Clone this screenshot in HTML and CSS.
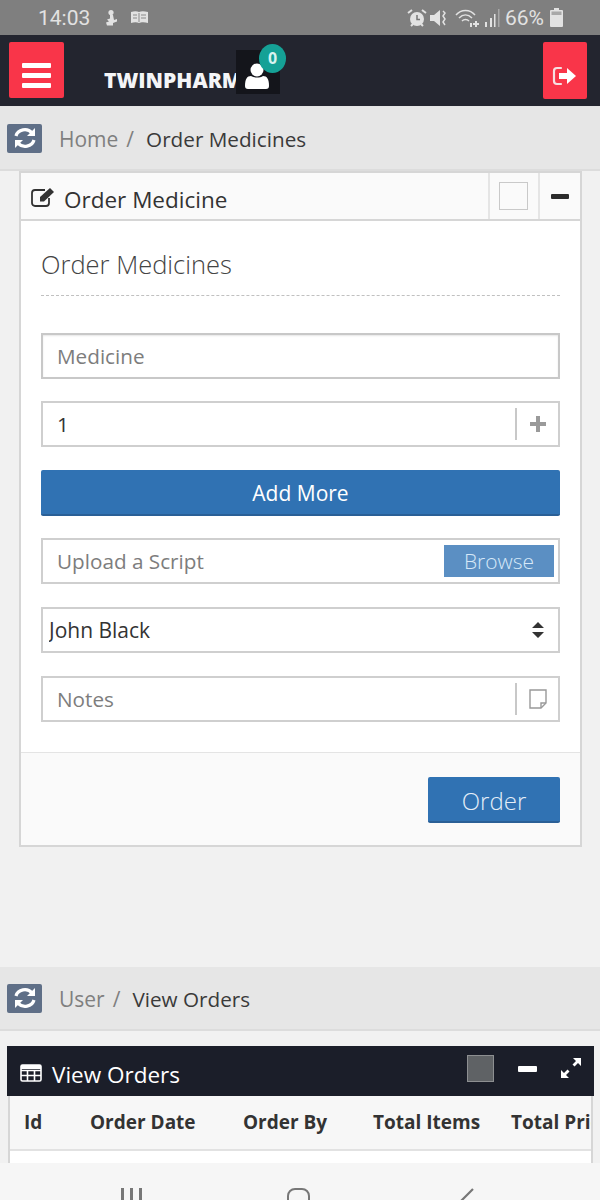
FILE: index.html
```html
<!DOCTYPE html>
<html lang="en">
<head>
    <meta charset="UTF-8">
    <meta name="viewport" content="width=device-width, initial-scale=1.0">
    <title>Order Medicines</title>
    <link rel="stylesheet" href="styles.css">
</head>
<body>
    <!-- Phone status bar -->
    <div class="status-bar">
        <div class="status-left">
            <span class="clock">14:03</span>
            <svg class="status-icon" width="16" height="18" viewBox="0 0 16 18"><circle cx="8" cy="3.500" r="2.600" fill="#e2e2e2"/><path d="M7 6h3l1 5 3-1v2.500l-4 1.500v2.500H4l-1-3 3-1-2-2 3-1z" fill="#e2e2e2"/></svg>
            <svg class="status-icon book" width="19" height="15" viewBox="0 0 19 15"><path d="M1 2c3-1 6-1 8 0 2-1 5-1 9 0v11c-3-1-7-1-9 0-2-1-5-1-8 0z" fill="#e2e2e2"/><path d="M9 3v9" stroke="#8a8a8a"/><path d="M3 5h4M3 8h4M11 5h5M11 8h5" stroke="#8a8a8a"/></svg>
        </div>
        <div class="status-right">
            <svg width="20" height="20" viewBox="0 0 20 20"><circle cx="10" cy="11" r="7" fill="#e2e2e2"/><path d="M10 7v4.500h3" stroke="#777" stroke-width="1.500" fill="none"/><path d="M1 5l4-3M19 5l-4-3M4 18l2-2M16 18l-2-2" stroke="#e2e2e2" stroke-width="2"/></svg>
            <svg width="18" height="20" viewBox="0 0 18 20"><path d="M0 7h4l6-5v16l-6-5H0z" fill="#e2e2e2"/><path d="M13 3l2 2-2 3 2 3-2 3 2 3" stroke="#e2e2e2" stroke-width="1.500" fill="none"/></svg>
            <svg class="wifi" width="26" height="20" viewBox="0 0 26 20"><path d="M1 7c5-6 14-6 19 0M4 10c4-4 9-4 13 0M7 13c2-2 5-2 7 0" stroke="#e2e2e2" stroke-width="1.500" fill="none"/><path d="M15 15h2v4h-2zM20 13h2v2h2v2h-2v2h-2v-2h-2v-2h2z" fill="#e2e2e2"/></svg>
            <svg width="16" height="20" viewBox="0 0 16 20"><path d="M1 14h2v5H1zM6 10h2v9H6zM10 6h1.500v13H10z" fill="#e2e2e2"/><path d="M14 1h1.500v18H14z" fill="#a8a8a8"/></svg>
            <span class="battery-text">66%</span>
            <svg width="13" height="19" viewBox="0 0 13 19"><path d="M4 0h5v2h3a1 1 0 0 1 1 1v15a1 1 0 0 1-1 1H1a1 1 0 0 1-1-1V3a1 1 0 0 1 1-1h3z" fill="#e2e2e2"/><path d="M1.500 3.500h10V7h-10z" fill="#a8a8a8"/></svg>
        </div>
    </div>

    <div class="header">
        <button class="red-btn menu">
            <span class="burger"></span>
            <span class="burger"></span>
            <span class="burger"></span>
        </button>
        <div class="logo-wrap"><span class="logo">TWINPHARM</span></div>
        <div class="user-box">
            <svg width="26" height="28" viewBox="0 0 26 28"><circle cx="13" cy="8" r="6.500" fill="#fff"/><path d="M1 24c0-7 2-10 6-10 3 2 9 2 12 0 4 0 6 3 6 10 0 2-1 3-3 3H4c-2 0-3-1-3-3z" fill="#fff"/></svg>
            <span class="badge">0</span>
        </div>
        <button class="red-btn logout">
            <svg width="26" height="22" viewBox="0 0 26 22"><path d="M9 3H5a3 3 0 0 0-3 3v10a3 3 0 0 0 3 3h4" stroke="#f6dfe2" stroke-width="2.200" fill="none" stroke-linecap="round"/><path d="M7 8h8V3l9 8-9 8v-5H7z" fill="#fff"/></svg>
        </button>
    </div>

    <div class="main">
        <div class="crumb">
            <span class="crumb-icon">
                <svg width="26" height="24" viewBox="0 0 26 24"><path d="M4 10a9 8 0 0 1 16-3" stroke="#fff" stroke-width="3.200" fill="none"/><path d="M23 2v8h-8z" fill="#fff"/><path d="M22 14a9 8 0 0 1-16 3" stroke="#fff" stroke-width="3.200" fill="none"/><path d="M3 22v-8h8z" fill="#fff"/></svg>
            </span>
            <span class="crumb-parent">Home</span>
            <span class="crumb-sep">/</span>
            <span class="crumb-current">Order Medicines</span>
        </div>

        <div class="card">
            <div class="card-head">
                <svg class="edit-icon" width="24" height="20" viewBox="0 0 24 20"><path d="M18 11v5a3 3 0 0 1-3 3H4a3 3 0 0 1-3-3V6a3 3 0 0 1 3-3h10" stroke="#333" stroke-width="1.800" fill="none"/><path d="M9 10l10-9 4 4-10 9.500H9z" fill="#333"/></svg>
                <span class="card-title">Order Medicine</span>
                <span class="head-cell"><span class="color-box"></span></span>
                <span class="head-cell"><span class="minus"></span></span>
            </div>
            <div class="card-body">
                <h2 class="form-title">Order Medicines</h2>
                <div class="form-list">
                    <div class="field field-first"><input type="text" placeholder="Medicine"></div>
                    <div class="field">
                        <input type="text" value="1">
                        <span class="field-addon">
                            <svg width="18" height="18" viewBox="0 0 18 18"><path d="M7 1h4v6h6v4h-6v6H7v-6H1V7h6z" fill="#9a9a9a"/></svg>
                        </span>
                    </div>
                    <button class="btn btn-wide">Add More</button>
                    <div class="field">
                        <input type="text" placeholder="Upload a Script">
                        <span class="browse">Browse</span>
                    </div>
                    <div class="field">
                        <select class="select">
                            <option>John Black</option>
                        </select>
                        <svg class="select-arrows" width="14" height="18" viewBox="0 0 14 18"><path d="M7 1l6 6H1zM7 17l-6-6h12z" fill="#333"/></svg>
                    </div>
                    <div class="field">
                        <input type="text" placeholder="Notes">
                        <span class="field-addon">
                            <svg width="20" height="20" viewBox="0 0 20 20"><path d="M2 1h16v13l-5 5H2z" fill="none" stroke="#999" stroke-width="1.400"/><path d="M13 19v-5h5" fill="none" stroke="#999" stroke-width="1.400"/></svg>
                        </span>
                    </div>
                </div>
            </div>
            <div class="card-foot">
                <button class="btn btn-order">Order</button>
            </div>
        </div>

        <div class="crumb crumb-second">
            <span class="crumb-icon">
                <svg width="26" height="24" viewBox="0 0 26 24"><path d="M4 10a9 8 0 0 1 16-3" stroke="#fff" stroke-width="3.200" fill="none"/><path d="M23 2v8h-8z" fill="#fff"/><path d="M22 14a9 8 0 0 1-16 3" stroke="#fff" stroke-width="3.200" fill="none"/><path d="M3 22v-8h8z" fill="#fff"/></svg>
            </span>
            <span class="crumb-parent">User</span>
            <span class="crumb-sep">/</span>
            <span class="crumb-current">View Orders</span>
        </div>

        <div class="orders">
            <div class="orders-head">
                <svg class="table-icon" width="22" height="18" viewBox="0 0 22 18"><rect x="1" y="1" width="20" height="16" rx="1.500" fill="none" stroke="#fff" stroke-width="1.600"/><path d="M1 6.500h20M1 11.500h20M7.500 6v11M14.500 6v11" stroke="#fff" stroke-width="1.600"/><path d="M1 1h20v4H1z" fill="#fff"/></svg>
                <span class="orders-title">View Orders</span>
                <span class="grey-box"></span>
                <span class="white-minus"></span>
                <svg class="expand-icon" width="22" height="22" viewBox="0 0 22 22"><path d="M13 1h8v8l-3-3-3.500 3.500-2-2L16 4zM9 21H1v-8l3 3 3.500-3.500 2 2L6 18z" fill="#fff"/></svg>
            </div>
            <div class="table-wrap">
                <table class="orders-table">
                    <thead>
                        <tr>
                            <th class="col-id">Id</th>
                            <th class="col-date">Order Date</th>
                            <th class="col-by">Order By</th>
                            <th class="col-items">Total Items</th>
                            <th class="col-price">Total Price</th>
                        </tr>
                    </thead>
                </table>
            </div>
        </div>
    </div>

    <!-- Phone navigation bar, only the top of the icons is on screen -->
    <div class="nav-bar">
        <span class="nav-recent"><i></i><i></i><i></i></span>
        <span class="nav-home"></span>
        <svg class="nav-back" width="14" height="24" viewBox="0 0 14 24"><path d="M13 1L2 12l11 11" stroke="#777" stroke-width="2.200" fill="none"/></svg>
    </div>
</body>
</html>
```

FILE: styles.css
```css
* {
    box-sizing: border-box;
}
html, body {
    height: 1200px;
    overflow: hidden;
}
body {
    margin: 0;
    display: flex;
    flex-direction: column;
    font-family: "Open Sans", Arial, sans-serif;
    background: #f1f1f1;
    color: #333;
}
.status-bar {
    height: 35px;
    flex: none;
    background: #7f7f7f;
    display: flex;
    justify-content: space-between;
    align-items: center;
    padding: 0 37px 0 38px;
    color: #e2e2e2;
    font-family: Roboto, Arial, sans-serif;
    font-size: 21px;
}
.status-left, .status-right {
    display: flex;
    align-items: center;
}
.status-left .status-icon {
    margin-left: 13px;
}
.status-left .book {
    margin-left: 11px;
}
.status-right {
    gap: 3px;
}
.wifi {
    margin-left: 4px;
}
.battery-text {
    margin: 0 3px 0 2px;
}
.header {
    height: 72px;
    flex: none;
    background: #23252f;
    border-bottom: 1px solid #e4e4e4;
    display: flex;
    align-items: flex-start;
    padding: 7px 0 0 9px;
}
.red-btn {
    width: 55px;
    height: 56px;
    background: #f93549;
    border: none;
    border-radius: 2px;
    padding: 0;
    display: flex;
    flex-direction: column;
    align-items: center;
    justify-content: center;
    gap: 5px;
}
.menu {
    padding-top: 10px;
}
.burger {
    width: 29px;
    height: 5px;
    background: #fff;
    border-radius: 1px;
}
.logout {
    width: 44px;
    height: 57px;
    margin-left: auto;
    margin-right: 13px;
    padding-top: 10px;
}
.logo-wrap {
    width: 132px;
    margin: 23px 0 0 40px;
    white-space: nowrap;
}
.logo {
    font-size: 21px;
    line-height: 30px;
    font-weight: 800;
    color: #f4f5f7;
}
.user-box {
    width: 44px;
    height: 44px;
    margin-top: 8px;
    background: #14151b;
    position: relative;
    display: flex;
    justify-content: center;
    align-items: flex-end;
    padding: 0 2px 4px 0;
}
.badge {
    position: absolute;
    top: -6px;
    right: -6px;
    width: 27px;
    height: 29px;
    border-radius: 50%;
    background: #15a196;
    color: #d8f3f0;
    font-size: 16px;
    font-weight: 700;
    text-align: center;
    line-height: 29px;
}
.main {
    flex: 1;
    min-height: 0;
    overflow: hidden;
    display: flex;
    flex-direction: column;
}
.crumb {
    height: 64px;
    flex: none;
    background: #e6e6e6;
    border-bottom: 2px solid #dcdcdc;
    display: flex;
    align-items: center;
    padding-left: 7px;
    font-size: 21px;
}
.crumb-icon {
    width: 35px;
    height: 29px;
    background: #5f6f87;
    border-radius: 2px;
    display: flex;
    align-items: center;
    justify-content: center;
}
.crumb-parent {
    color: #7f7f7f;
    margin-left: 17px;
    padding-top: 2px;
}
.crumb-sep {
    color: #7f7f7f;
    margin: 0 12px 0 8px;
    padding-top: 2px;
}
.crumb-current {
    color: #3a3a3a;
    font-size: 20.700px;
    padding-top: 2px;
}
.card {
    flex: none;
    margin: 0 18px 0 19px;
    height: 676px;
    border: 2px solid #d6d6d6;
    background: #fff;
    display: flex;
    flex-direction: column;
}
.card-head {
    height: 48px;
    flex: none;
    background: #fafafa;
    border-bottom: 2px solid #d6d6d6;
    display: flex;
    align-items: center;
}
.edit-icon {
    margin: 1px 9px 0 10px;
}
.card-title {
    flex: 1;
    font-size: 22.500px;
    line-height: 30px;
    padding-top: 8px;
}
.head-cell {
    width: 50px;
    height: 100%;
    border-left: 2px solid #e5e5e5;
    display: flex;
    align-items: center;
    justify-content: center;
}
.head-cell + .head-cell {
    width: 42px;
}
.color-box {
    width: 29px;
    height: 28px;
    margin: 0 2px 1px 0;
    background: #fafafa;
    border: 1px solid #c9c9c9;
}
.minus {
    width: 18px;
    height: 5px;
    background: #2b2b2b;
    border-radius: 1px;
}
.card-body {
    flex: 1;
    padding: 0 20px;
    border-bottom: 1px solid #e4e4e4;
}
.form-title {
    margin: 0 0 36.600px;
    height: 75px;
    padding-top: 25px;
    font-size: 25.500px;
    line-height: 36px;
    font-weight: 300;
    color: #444;
    border-bottom: 1px dashed #c0c0c0;
}
.form-list {
    display: flex;
    flex-direction: column;
    gap: 22.600px;
}
.field {
    height: 46px;
    border: 2px solid #cfcfcf;
    background: #fff;
    display: flex;
    align-items: center;
    position: relative;
}
.field-first {
    border-color: #c8c8c8;
    box-shadow: inset 0 1px 2px rgba(0, 0, 0, 0.1);
}
.field input {
    flex: 1;
    min-width: 0;
    height: 100%;
    border: none;
    outline: none;
    background: transparent;
    padding: 0 14px;
    font-family: inherit;
    font-size: 20.700px;
    color: #333;
}
.field input::placeholder {
    color: #7d7d7d;
    opacity: 1;
}
.field-addon {
    width: 43px;
    height: 32px;
    border-left: 2px solid #c8c8c8;
    display: flex;
    align-items: center;
    justify-content: center;
}
.browse {
    position: absolute;
    top: 5px;
    right: 4px;
    width: 110px;
    height: 32px;
    background: #5b8fc3;
    color: #d6e8f8;
    font-size: 21px;
    font-weight: 300;
    line-height: 32px;
    text-align: center;
}
.select {
    flex: 1;
    height: 100%;
    border: none;
    outline: none;
    background: transparent;
    appearance: none;
    padding: 0 6px;
    font-family: inherit;
    font-size: 21px;
    color: #333;
}
.select-arrows {
    position: absolute;
    right: 13px;
    top: 12px;
}
.btn {
    height: 46px;
    background: #3072b3;
    border: none;
    border-bottom: 2px solid #2a5f96;
    border-radius: 2px;
    color: #fff;
    font-family: inherit;
    font-size: 21px;
    padding: 2px 0 0;
}
.btn-wide {
    width: 100%;
}
.card-foot {
    height: 92px;
    flex: none;
    background: #fafafa;
    display: flex;
    justify-content: flex-end;
    padding: 24px 20px 0 0;
}
.btn-order {
    width: 132px;
    height: 46px;
    font-size: 24px;
    font-weight: 300;
    color: #e4eef8;
}
.crumb-second {
    margin-top: 120px;
}
.orders {
    flex: none;
    margin: 15px 6px 0 7px;
}
.orders-head {
    height: 50px;
    background: #1b1e29;
    display: flex;
    align-items: center;
    color: #fff;
    padding-right: 12px;
}
.table-icon {
    margin: 3px 10px 0 13px;
}
.orders-title {
    flex: 1;
    font-size: 22.500px;
    line-height: 30px;
    padding-top: 8px;
}
.grey-box {
    width: 27px;
    height: 27px;
    background: #5f6265;
    border: 1px solid #8d8f91;
    margin-bottom: 5px;
}
.white-minus {
    width: 19px;
    height: 6px;
    background: #fff;
    border-radius: 1px;
    margin: 0 23px 4px 24px;
}
.expand-icon {
    margin-bottom: 6px;
}
.table-wrap {
    margin: 0 1px;
    height: 68px;
    overflow: hidden;
    background: #fff;
    border-left: 2px solid #d6d6d6;
    border-right: 2px solid #d6d6d6;
}
.orders-table {
    width: 620px;
    table-layout: fixed;
    border-collapse: collapse;
}
.orders-table th {
    height: 54px;
    background: #f7f7f7;
    border-bottom: 2px solid #e2e2e2;
    font-size: 19px;
    font-weight: 700;
    text-align: left;
    white-space: nowrap;
    padding: 0 0 1px 14px;
    color: #333;
}
.col-id { width: 66px; }
.col-date { width: 153px; }
.col-by { width: 130px; }
.col-items { width: 138px; }
.nav-bar {
    height: 37px;
    flex: none;
    background: #f6f6f6;
    position: relative;
    z-index: 2;
    margin-top: -37px;
    display: flex;
    align-items: flex-start;
    padding: 25px 0 0 121px;
    overflow: hidden;
}
.nav-recent {
    width: 21px;
    height: 24px;
    display: flex;
    justify-content: space-between;
}
.nav-recent i {
    width: 3px;
    height: 24px;
    background: #777;
}
.nav-home {
    width: 23px;
    height: 24px;
    margin-left: 145px;
    border: 2.500px solid #777;
    border-radius: 8px;
}
.nav-back {
    margin-left: 150px;
}
```
